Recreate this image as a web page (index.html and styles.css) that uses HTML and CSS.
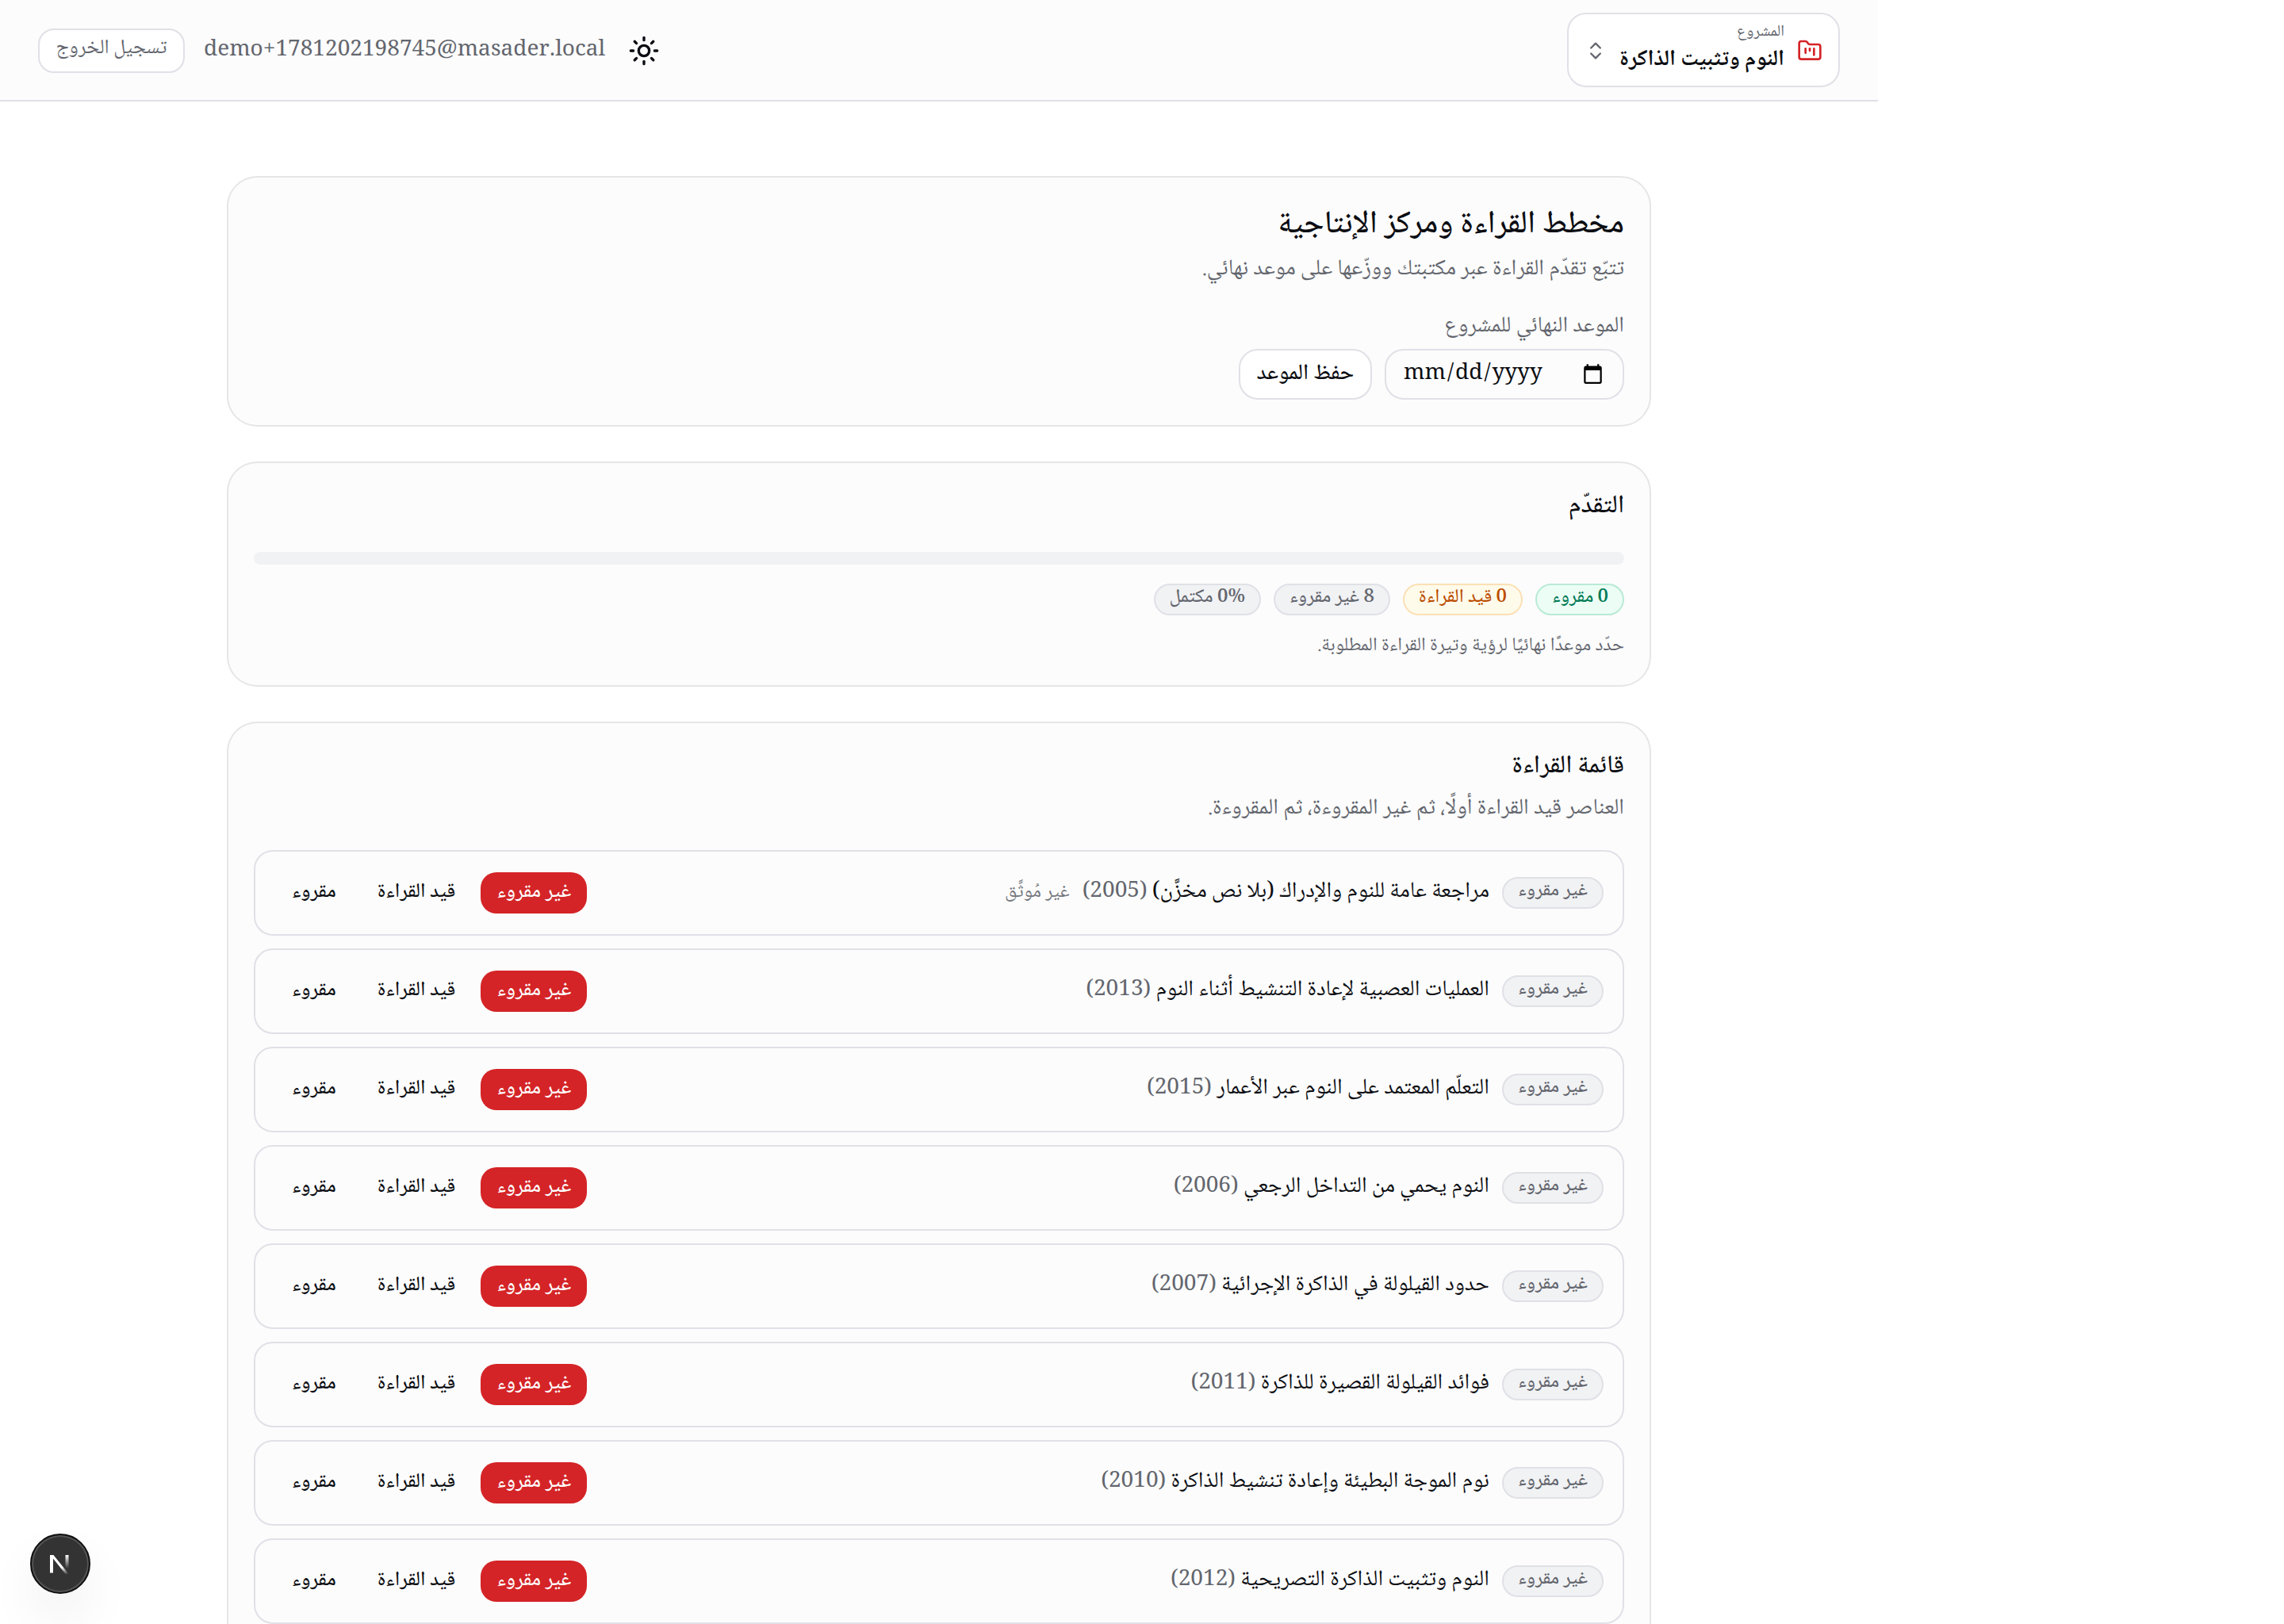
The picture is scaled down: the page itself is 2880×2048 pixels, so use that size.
FILE: index.html
```
<!DOCTYPE html>
<html lang="ar" dir="rtl">
<head>
<meta charset="utf-8">
<title>مخطط القراءة ومركز الإنتاجية</title>
<link rel="stylesheet" href="styles.css">
</head>
<body>
<div class="app">
<header class="topbar">
  <button class="project">
    <svg class="icon-folder" viewBox="0 0 24 24"><path d="M4 20h16a2 2 0 0 0 2-2V8a2 2 0 0 0-2-2h-7.93a2 2 0 0 1-1.66-.9l-.82-1.2A2 2 0 0 0 7.93 3H4a2 2 0 0 0-2 2v13c0 1.1.9 2 2 2Z"/><path d="M8 10v4"/><path d="M12 10v2"/><path d="M16 10v6"/></svg>
    <span class="project-text"><span class="project-label">المشروع</span><span class="project-name">النوم وتثبيت الذاكرة</span></span>
    <svg class="icon-chevrons" viewBox="0 0 24 24"><path d="m7 15 5 5 5-5"/><path d="m7 9 5-5 5 5"/></svg>
  </button>
  <div class="account">
    <svg class="icon-sun" viewBox="0 0 24 24"><circle cx="12" cy="12" r="4"/><path d="M12 2v2"/><path d="M12 20v2"/><path d="m4.93 4.93 1.41 1.41"/><path d="m17.66 17.66 1.41 1.41"/><path d="M2 12h2"/><path d="M20 12h2"/><path d="m6.34 17.66-1.41 1.41"/><path d="m19.07 4.93-1.41 1.41"/></svg>
    <span class="email" dir="ltr">demo+1781202198745@masader.local</span>
    <button class="signout">تسجيل الخروج</button>
  </div>
</header>
<main class="main">
  <section class="card card-plan">
    <h1 class="page-title">مخطط القراءة ومركز الإنتاجية</h1>
    <p class="desc">تتبّع تقدّم القراءة عبر مكتبتك ووزّعها على موعد نهائي.</p>
    <span class="field-label">الموعد النهائي للمشروع</span>
    <div class="field-row">
      <div class="date">
        <svg class="icon-date" viewBox="0 0 24 24"><path d="M20 3h-1V1h-2v2H7V1H5v2H4c-1.1 0-2 .9-2 2v16c0 1.1.9 2 2 2h16c1.1 0 2-.9 2-2V5c0-1.1-.9-2-2-2zm0 18H4V8h16v13z"/></svg>
        <span class="date-text" dir="ltr"><span>mm</span>/<span>dd</span>/<span>yyyy</span></span>
      </div>
      <button class="save">حفظ الموعد</button>
    </div>
  </section>
  <section class="card card-progress">
    <h2 class="title">التقدّم</h2>
    <div class="bar"></div>
    <div class="badges">
      <span class="badge badge-green">0 مقروء</span>
      <span class="badge badge-amber">0 قيد القراءة</span>
      <span class="badge">8 غير مقروء</span>
      <span class="badge">0% مكتمل</span>
    </div>
    <p class="hint">حدّد موعدًا نهائيًا لرؤية وتيرة القراءة المطلوبة.</p>
  </section>
  <section class="card card-list">
    <h2 class="title">قائمة القراءة</h2>
    <p class="desc">العناصر قيد القراءة أولًا، ثم غير المقروءة، ثم المقروءة.</p>
    <ul class="list">
      <li class="item"><span class="badge">غير مقروء</span><span class="item-title">مراجعة عامة للنوم والإدراك (بلا نص مخزَّن) <span class="year">(2005)</span><span class="tag">غير مُوثَّق</span></span><span class="actions"><button class="act active">غير مقروء</button><button class="act">قيد القراءة</button><button class="act">مقروء</button></span></li>
      <li class="item"><span class="badge">غير مقروء</span><span class="item-title">العمليات العصبية لإعادة التنشيط أثناء النوم <span class="year">(2013)</span></span><span class="actions"><button class="act active">غير مقروء</button><button class="act">قيد القراءة</button><button class="act">مقروء</button></span></li>
      <li class="item"><span class="badge">غير مقروء</span><span class="item-title">التعلّم المعتمد على النوم عبر الأعمار <span class="year">(2015)</span></span><span class="actions"><button class="act active">غير مقروء</button><button class="act">قيد القراءة</button><button class="act">مقروء</button></span></li>
      <li class="item"><span class="badge">غير مقروء</span><span class="item-title">النوم يحمي من التداخل الرجعي <span class="year">(2006)</span></span><span class="actions"><button class="act active">غير مقروء</button><button class="act">قيد القراءة</button><button class="act">مقروء</button></span></li>
      <li class="item"><span class="badge">غير مقروء</span><span class="item-title">حدود القيلولة في الذاكرة الإجرائية <span class="year">(2007)</span></span><span class="actions"><button class="act active">غير مقروء</button><button class="act">قيد القراءة</button><button class="act">مقروء</button></span></li>
      <li class="item"><span class="badge">غير مقروء</span><span class="item-title">فوائد القيلولة القصيرة للذاكرة <span class="year">(2011)</span></span><span class="actions"><button class="act active">غير مقروء</button><button class="act">قيد القراءة</button><button class="act">مقروء</button></span></li>
      <li class="item"><span class="badge">غير مقروء</span><span class="item-title">نوم الموجة البطيئة وإعادة تنشيط الذاكرة <span class="year">(2010)</span></span><span class="actions"><button class="act active">غير مقروء</button><button class="act">قيد القراءة</button><button class="act">مقروء</button></span></li>
      <li class="item"><span class="badge">غير مقروء</span><span class="item-title">النوم وتثبيت الذاكرة التصريحية <span class="year">(2012)</span></span><span class="actions"><button class="act active">غير مقروء</button><button class="act">قيد القراءة</button><button class="act">مقروء</button></span></li>
    </ul>
  </section>
</main>
</div>
<div class="dev-badge"><svg viewBox="0 0 40 40"><defs><linearGradient id="ga" gradientUnits="userSpaceOnUse" x1="20" y1="20" x2="28" y2="34"><stop offset=".3" stop-color="#fff"/><stop offset="1" stop-color="#fff" stop-opacity="0"/></linearGradient><linearGradient id="gb" x1="0" y1="0" x2="0" y2="1"><stop offset="0" stop-color="#fff"/><stop offset="1" stop-color="#fff" stop-opacity="0"/></linearGradient></defs><path d="M7 9h4.4L32 34.6l-2.6 2L11 13.4V31.5H7z" fill="url(#ga)"/><rect x="26.5" y="9" width="4" height="17" fill="url(#gb)"/></svg></div>
</body>
</html>
```
FILE: styles.css
```
* { box-sizing: border-box; }
html { overflow: hidden; }
body { margin: 0; height: 2048px; overflow: hidden; background: #fff; color: #0b0d12; font-family: "Noto Naskh Arabic", "Noto Serif", serif; font-size: 28px; line-height: 40px; }
button { font: inherit; color: inherit; margin: 0; }
h1, h2, p, ul { margin: 0; padding: 0; font-weight: 400; }
svg { display: block; fill: none; stroke: currentColor; stroke-width: 2; stroke-linecap: round; stroke-linejoin: round; flex: none; }
.app { width: 2368px; margin-right: auto; }
.topbar { height: 128px; padding: 0 48px; display: flex; align-items: center; justify-content: space-between; background: #fcfcfc; border-bottom: 2px solid #e0e0e7; }
.project { height: 94px; display: flex; align-items: center; gap: 16px; padding: 0 20px; background: #fff; border: 2px solid #e0e0e7; border-radius: 24px; }
.icon-folder { width: 32px; height: 32px; color: #d42427; margin-top: 2px; }
.icon-chevrons { width: 28px; height: 28px; color: #63666e; margin-top: 2px; }
.project-text { display: flex; flex-direction: column; text-align: right; padding-bottom: 4px; }
.project-label { font-size: 20px; line-height: 30px; color: #63666e; }
.project-name { font-size: 28px; line-height: 40px; font-weight: 700; }
.account { display: flex; align-items: center; gap: 24px; padding-top: 2px; }
.icon-sun { width: 40px; height: 40px; margin-left: 5px; }
.email { color: #63666e; }
.signout { height: 56px; padding: 0 20.5px 4px; background: #fff; border: 2px solid #e0e0e7; border-radius: 20px; font-size: 25.6px; color: #63666e; line-height: 40px; }
.main { padding: 96px 288px 0; display: flex; flex-direction: column; gap: 48px; }
.card { background: #fcfcfc; border-radius: 36px; box-shadow: 0 0 0 2px #e6e6e7; padding: 32px; }
.card-plan { height: 312px; }
.page-title { font-size: 40px; line-height: 56px; font-weight: 500; }
.desc { color: #63666e; line-height: 40px; margin-top: 8px; }
.field-label { display: block; color: #63666e; margin-top: 32px; line-height: 40px; }
.field-row { display: flex; gap: 16px; margin-top: 8px; }
.date { width: 302px; height: 64px; border: 2px solid #e0e0e7; border-radius: 24px; padding: 0 24px 0 20px; display: flex; align-items: center; justify-content: space-between; }
.date-text span { padding: 0 2px; }
.icon-date { width: 27px; height: 27px; fill: #000; stroke: none; margin-bottom: 2px; }
.save { min-width: 168px; height: 64px; padding: 0 20px; background: #fff; border: 2px solid #e0e0e7; border-radius: 24px; font-weight: 500; }
.card-progress { height: 280px; }
.title { font-size: 32px; line-height: 46px; font-weight: 500; }
.bar { height: 16px; border-radius: 8px; background: #f1f2f4; margin-top: 34px; }
.badges { display: flex; gap: 16px; margin-top: 24px; }
.badge { height: 40px; display: flex; align-items: center; padding: 0 18px 4px; border: 2px solid #e0e0e7; border-radius: 20px; background: #f1f2f4; color: #63666e; font-size: 24px; font-weight: 500; line-height: 32px; white-space: nowrap; }
.badge-green { min-width: 112px; background: #ecfdf5; border-color: #b9ead5; color: #007a55; }
.badge-amber { background: #fffbeb; border-color: #fbe0b5; color: #bb4d00; }
.hint { font-size: 24px; line-height: 32px; color: #63666e; margin-top: 23px; }
.card-list { padding-bottom: 34px; }
.card-list .desc { margin-top: 10px; }
.list { list-style: none; display: flex; flex-direction: column; gap: 16px; margin-top: 32px; }
.item { height: 108px; border: 2px solid #e0e0e7; border-radius: 24px; padding: 0 24px; display: flex; align-items: center; gap: 16px; }
.item-title { padding-bottom: 2px; }
.year { color: #63666e; }
.tag { color: #74777e; font-size: 24px; margin-right: 16px; }
.actions { display: flex; gap: 12px; margin-right: auto; padding-left: 2px; }
.act { height: 52px; padding: 0 20px; border: 0; background: none; border-radius: 20px; font-size: 25.6px; font-weight: 500; line-height: 40px; }
.act.active { background: #d42427; color: #fff; }
.dev-badge { position: fixed; left: 38px; top: 1934px; width: 76px; height: 76px; border-radius: 50%; background: #333; border: 2px solid #111; box-shadow: inset 0 0 0 2px #555, 0 32px 64px rgba(0,0,0,.06); display: flex; align-items: center; justify-content: center; }
.dev-badge svg { width: 40px; height: 40px; stroke: none; }
```
